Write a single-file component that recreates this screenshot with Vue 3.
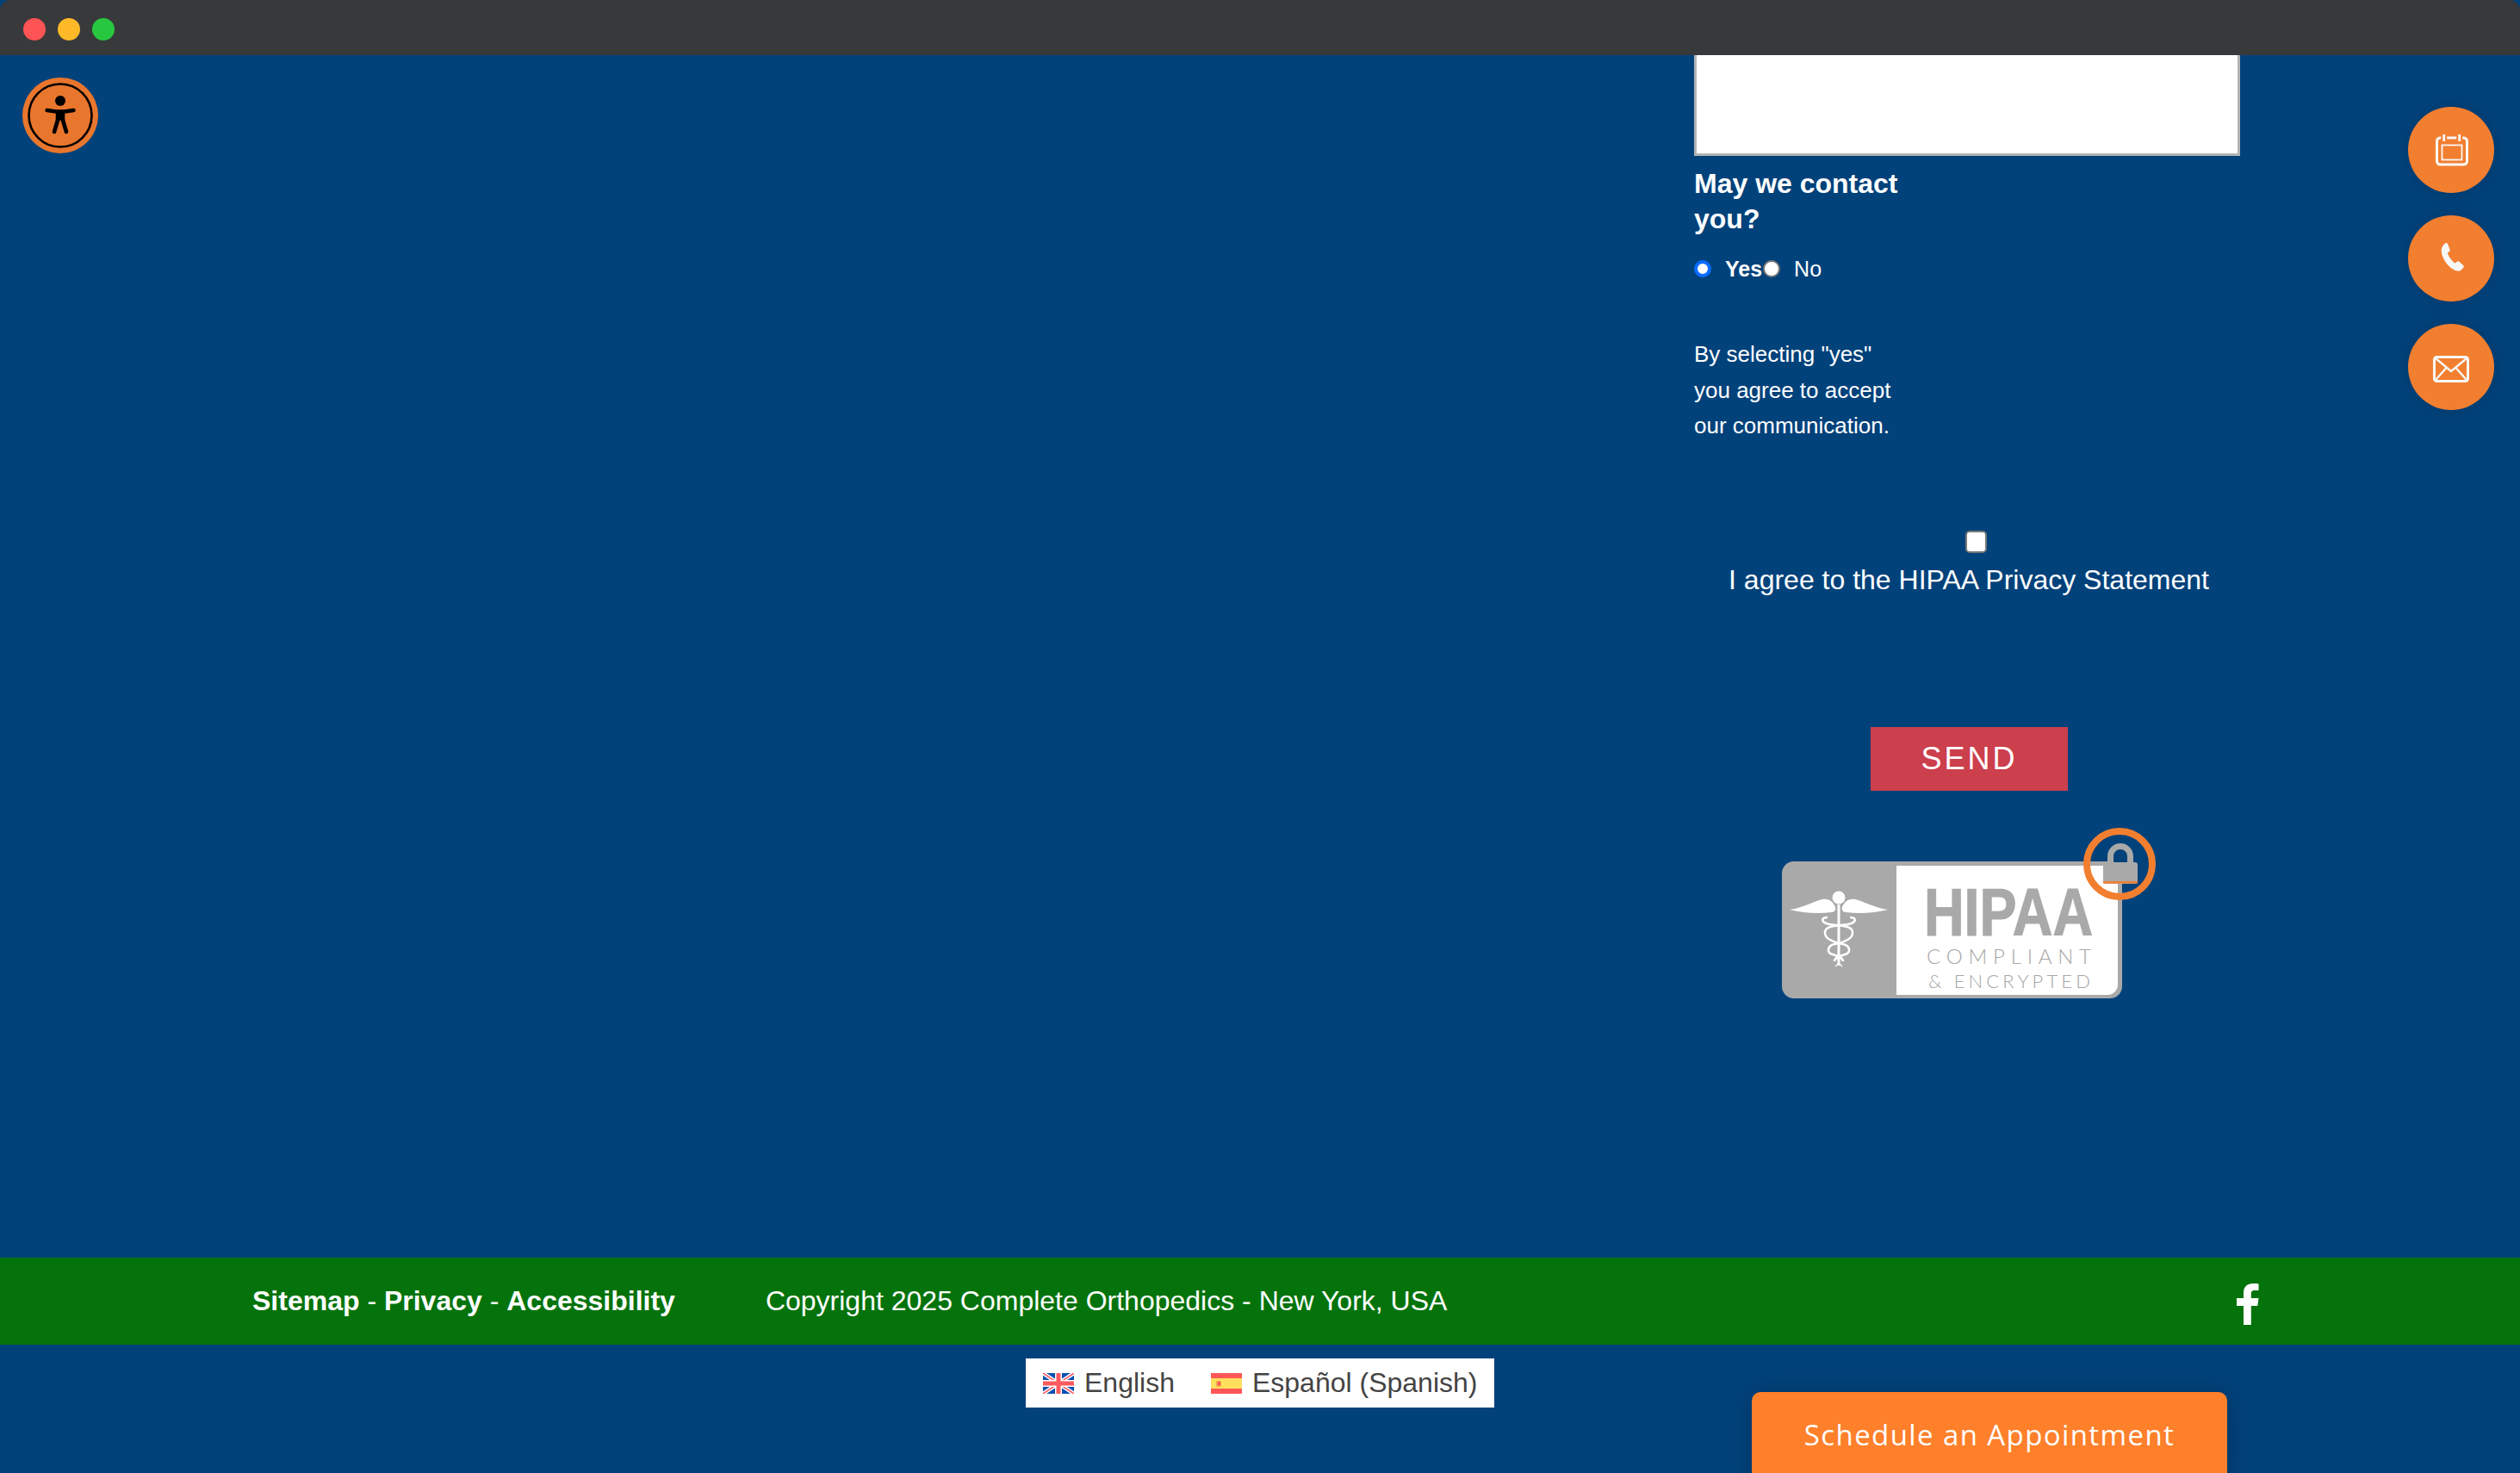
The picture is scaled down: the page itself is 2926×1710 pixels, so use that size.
<script setup>
const floats = ['cal', 'phone', 'mail']
</script>

<template>
  <div class="page">
    <header class="titlebar">
      <span class="light red"></span>
      <span class="light yellow"></span>
      <span class="light green"></span>
    </header>

    <main class="main">
      <form class="form" @submit.prevent>
        <textarea class="message" aria-label="Message"></textarea>
        <div class="narrow">
          <h3 class="ask">May we contact you?</h3>
          <div class="radios">
            <input class="radio on" type="radio" name="c" checked />
            <label class="yes">Yes</label>
            <input class="radio" type="radio" name="c" />
            <label class="no">No</label>
          </div>
          <p class="note">By selecting "yes" you agree to accept our communication.</p>
        </div>
        <div class="agree">
          <input class="check" type="checkbox" />
          <span class="agree-text">I agree to the HIPAA Privacy Statement</span>
        </div>
        <button class="send" type="button">SEND</button>
        <svg class="badge" width="420" height="190" viewBox="0 0 420 190">
          <rect x="3" y="25" width="395" height="159" rx="14" fill="#a9a9a9" />
          <path d="M136 30H393V168a12 12 0 0 1-12 12H136Z" fill="#fff" />
          <g transform="translate(4 5)">
            <g fill="#fff">
              <circle cx="65" cy="62" r="7.5" />
              <path d="M8 76C24 74 36 66 46 64C53 63 58 66 61 73C62 76 60 79 57 79C40 81 24 80 8 76Z" />
              <path d="M122 76C106 74 94 66 84 64C77 63 72 66 69 73C68 76 70 79 73 79C90 81 106 80 122 76Z" />
              <rect x="63.5" y="70" width="3" height="71" />
            </g>
            <g fill="none" stroke="#fff" stroke-width="2.6">
              <path d="M78 85C86 85 86 91 76 93C64 95 50 94 49 102C48 110 60 114 70 116C78 118 80 126 72 128C66 130 60 132 60 136" />
              <path d="M52 85C44 85 44 91 54 93C66 95 80 94 81 102C82 110 70 114 60 116C52 118 50 126 58 128C64 130 70 132 70 136" />
            </g>
            <path d="M65 138l-4 4M65 138l4 4" stroke="#fff" stroke-width="1.2" />
          </g>
          <text class="b-hipaa" x="168" y="111" textLength="196" lengthAdjust="spacingAndGlyphs">HIPAA</text>
          <text class="b-sub" x="171" y="144" textLength="191" lengthAdjust="spacing">COMPLIANT</text>
          <text class="b-sub small" x="173" y="172" textLength="188" lengthAdjust="spacing">&amp; ENCRYPTED</text>
          <rect x="394" y="50" width="4" height="10" fill="#a9a9a9" />
          <path d="M384.500 28V19a11.500 11.500 0 0 1 23 0V28" fill="none" stroke="#a9a9a9" stroke-width="7" />
          <rect x="376" y="26" width="40" height="25" rx="3" fill="#a9a9a9" />
          <rect x="376" y="48" width="40" height="2.500" fill="#f27f30" />
          <circle cx="395" cy="28" r="38" fill="none" stroke="#f27f30" stroke-width="8" />
        </svg>
      </form>

      <div class="access">
        <svg width="88" height="88" viewBox="0 0 88 88">
          <circle cx="44" cy="44" r="44" fill="#e8762d" />
          <circle cx="44" cy="44" r="36.500" fill="none" stroke="#000" stroke-width="2.600" />
          <circle cx="44" cy="27" r="6" fill="#000" />
          <g fill="none" stroke="#000" stroke-linecap="round" stroke-linejoin="round">
            <path d="M28.500 38L39 39.500H49L59.500 38" stroke-width="4.400" />
            <path d="M44 40V50" stroke-width="10.500" stroke-linecap="butt" />
            <path d="M41.500 48L37 63M46.500 48L51 63" stroke-width="4.600" />
          </g>
        </svg>
      </div>

      <div class="floats">
        <a v-for="f in floats" :key="f" class="float">
          <svg v-if="f === 'cal'" class="ico-cal" width="42" height="42" viewBox="0 0 42 42" fill="none" stroke="#f7f7f7">
            <rect x="4.500" y="7" width="35" height="31" rx="4" stroke-width="3" />
            <rect x="10.500" y="15.500" width="23" height="17" stroke-width="1.800" />
            <path d="M12.700 2V12M30.700 2V12" stroke="#f27f30" stroke-width="7" />
            <path d="M12.700 3V11M30.700 3V11" stroke-width="2.800" />
          </svg>
          <svg v-else-if="f === 'phone'" class="ico-phone" width="27" height="33" viewBox="0 0 27 33">
            <path d="M5 .6C6-.2 7.500 0 8 1L10.500 7.500C10.900 8.600 10.600 9.400 9.800 10L8.500 11C8 11.500 7.900 12 8.200 12.800C9.800 16.800 12.500 20.300 15.600 23C16.200 23.500 16.800 23.400 17.300 23L18.800 21.800C19.600 21.200 20.400 21.200 21.200 21.800L26.200 26C27 26.800 27 27.600 26.400 28.400L25 30C23.600 32 21.400 33 19 32.600C12 31 5.400 24 2 15.600C0 10.400 0 5 5 .6Z" fill="#f7f7f7" />
          </svg>
          <svg v-else class="ico-mail" width="44" height="31" viewBox="0 0 44 31" fill="none" stroke="#f7f7f7">
            <rect x="2.500" y="1.500" width="39" height="28" rx="3" stroke-width="3" />
            <path d="M4 3L22 18L40 3M4 28L16.500 14M40 28L27.500 14" stroke-width="2.400" />
          </svg>
        </a>
      </div>
    </main>

    <footer class="bar">
      <nav class="links"><b>Sitemap</b> - <b>Privacy</b> - <b>Accessibility</b></nav>
      <span class="copy">Copyright 2025 Complete Orthopedics - New York, USA</span>
      <svg class="fb" width="26" height="48" viewBox="0 0 26 48">
        <path d="M8 48V26H0V17H8V11C8 3.500 12.500 0 19 0C22 0 24.500 .2 25.500 .4V8H21C17.500 8 16.800 9.700 16.800 12V17H25.500L24.300 26H16.800V48Z" fill="#fff" />
      </svg>
    </footer>

    <div class="langrow">
      <div class="lang">
        <span class="lang-item">
          <svg width="36" height="24" viewBox="0 0 36 24">
            <rect width="36" height="24" fill="#0a4fb0" />
            <path d="M0 0L36 24M36 0L0 24" stroke="#fff" stroke-width="4.500" />
            <path d="M0 0L36 24M36 0L0 24" stroke="#ff5a5f" stroke-width="1.600" />
            <path d="M18 0V24M0 12H36" stroke="#fff" stroke-width="8" />
            <path d="M18 0V24M0 12H36" stroke="#ff5a5f" stroke-width="5" />
          </svg>
          English
        </span>
        <span class="lang-item">
          <svg width="36" height="24" viewBox="0 0 36 24">
            <rect width="36" height="24" fill="#ff5757" />
            <rect y="6" width="36" height="12" fill="#ffdf5c" />
            <rect x="6" y="9" width="6" height="7" rx="2" fill="#f0a050" />
            <rect x="8" y="10" width="3" height="4" fill="#ff5757" />
          </svg>
          Español (Spanish)
        </span>
      </div>
    </div>

    <a class="schedule">Schedule an Appointment</a>
  </div>
</template>

<style>
html, body { margin: 0; background: #00417a; }
</style>

<style scoped>
.page {
  position: relative;
  width: 2926px;
  height: 1710px;
  overflow: hidden;
  display: flex;
  flex-direction: column;
  background: #02427b;
  color: #fff;
  font-family: "Liberation Sans", Arial, sans-serif;
}
.titlebar {
  flex: 0 0 64px;
  box-sizing: border-box;
  display: flex;
  align-items: flex-start;
  gap: 14px;
  padding: 21px 0 0 27px;
  background: #38393b;
  border-radius: 12px 12px 0 0;
}
.light { width: 26px; height: 26px; border-radius: 50%; }
.red { background: #fe5455; }
.yellow { background: #feb928; }
.green { background: #27c83f; }

.main {
  position: relative;
  flex: 0 0 1396px;
  box-sizing: border-box;
  padding-left: 1966px;
}
.form { width: 640px; display: flex; flex-direction: column; }
.message {
  display: block;
  box-sizing: border-box;
  width: 634px;
  height: 117px;
  margin: 0 0 0 1px;
  background: #fff;
  border: 3px solid #b4b4b4;
  border-top: 0;
  border-radius: 0;
  resize: none;
}
.narrow { width: 240px; padding-left: 1px; }
.ask {
  margin: 12px 0 0;
  font-size: 32px;
  line-height: 41px;
  font-weight: 700;
}
.radios { display: flex; align-items: center; margin-top: 25px; height: 24px; }
.radio {
  appearance: none;
  box-sizing: border-box;
  width: 20px;
  height: 20px;
  margin: 0;
  border-radius: 50%;
  background: #fff;
  border: 2px solid #777;
}
.radio.on { border: 4px solid #0a6cff; }
.yes { margin-left: 16px; margin-right: 1px; font-size: 25px; font-weight: 700; }
.no { margin-left: 16px; font-size: 25px; }
.note {
  margin: 67px 0 0;
  font-size: 26px;
  line-height: 41.500px;
}
.agree {
  margin-top: 100px;
  width: 640px;
  display: flex;
  flex-direction: column;
  align-items: center;
}
.check {
  appearance: none;
  box-sizing: border-box;
  width: 25px;
  height: 26px;
  margin: 0 0 0 16px;
  background: #fff;
  border: 2px solid #777;
  border-radius: 5px;
}
.agree-text { margin-top: 10px; font-size: 32px; line-height: 42px; }
.send {
  align-self: flex-start;
  width: 229px;
  height: 74px;
  margin: 150px 0 0 206px;
  padding: 0;
  border: 0;
  background: #cc3f4c;
  color: #fff;
  font-family: inherit;
  font-size: 36px;
  letter-spacing: 3px;
}
.badge { display: block; margin: 57px 0 0 100px; overflow: visible; }
.b-hipaa { font-family: "Liberation Sans", sans-serif; font-weight: 700; font-size: 77px; fill: #a9a9a9; stroke: #a9a9a9; stroke-width: 1.200px; }
.b-sub { font-family: Lato, sans-serif; font-weight: 300; font-size: 24px; fill: #a6a6a6; }
.b-sub.small { font-size: 22px; }

.access { position: absolute; left: 26px; top: 26px; width: 88px; height: 88px; }
.access svg { display: block; }

.floats {
  position: absolute;
  top: 60px;
  right: 30px;
  display: flex;
  flex-direction: column;
  gap: 26px;
}
.float {
  width: 100px;
  height: 100px;
  border-radius: 50%;
  background: #f27f30;
  box-shadow: 0 0 20px rgba(0, 0, 0, 0.15);
  display: flex;
  align-items: center;
  justify-content: center;
}
.ico-phone { margin: 0 0 3px 3px; }
.ico-mail { margin-top: 5px; }

.bar {
  flex: 0 0 101px;
  box-sizing: border-box;
  display: flex;
  align-items: center;
  padding-left: 293px;
  background: #05730c;
  font-size: 32px;
}
.links b { font-weight: 700; }
.copy { margin-left: 105px; }
.fb { margin-left: 917px; margin-top: 7px; }

.langrow { display: flex; justify-content: flex-start; padding: 16px 0 0 1191px; }
.lang {
  width: 544px;
  height: 57px;
  box-sizing: border-box;
  background: #fff;
  color: #444;
  display: flex;
  align-items: center;
  padding-left: 20px;
  gap: 42px;
  font-size: 32px;
}
.lang-item { display: flex; align-items: center; gap: 12px; }

.schedule {
  position: absolute;
  left: 2034px;
  top: 1616px;
  width: 552px;
  height: 110px;
  box-sizing: border-box;
  padding-top: 27px;
  text-align: center;
  background: #fe802b;
  border-radius: 10px 10px 0 0;
  box-shadow: 0 0 30px rgba(0, 0, 0, 0.2);
  font-family: "Open Sans", sans-serif;
  font-size: 33px;
  font-weight: 500;
  letter-spacing: 1.400px;
}
</style>
